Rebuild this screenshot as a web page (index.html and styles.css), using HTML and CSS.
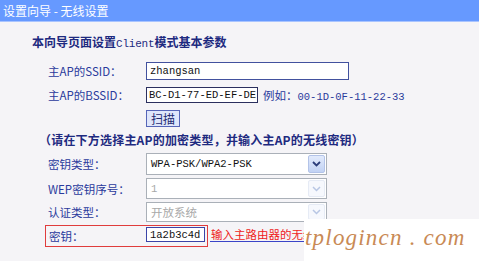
FILE: index.html
```html
<!DOCTYPE html>
<html>
<head>
<meta charset="utf-8">
<link rel="stylesheet" href="styles.css">
</head>
<body>
<div class="header">设置向导 - 无线设置</div>
<div class="content">
  <div class="title">本向导页面设置<span class="mono">Client</span>模式基本参数</div>
  <div class="row r-ssid">
    <span class="label">主AP的SSID：</span>
    <span class="input ssid">zhangsan</span>
  </div>
  <div class="row r-bssid">
    <span class="label">主AP的BSSID：</span>
    <span class="input bssid">BC-D1-77-ED-EF-DE</span>
    <span class="hint">例如：<span class="mono">00-1D-0F-11-22-33</span></span>
  </div>
  <div class="row r-scan">
    <span class="label"></span>
    <span class="btn">扫描</span>
  </div>
  <div class="note">（请在下方选择主AP的加密类型，并输入主AP的无线密钥）</div>
  <div class="row r-sel1">
    <span class="label">密钥类型：</span>
    <span class="select s1"><span class="val mono">WPA-PSK/WPA2-PSK</span><span class="arrow"><svg width="9" height="6" viewBox="0 0 9 6"><path d="M1 1 L4.5 4.5 L8 1" fill="none" stroke="#2c3d7a" stroke-width="1.8"/></svg></span></span>
  </div>
  <div class="row r-sel2">
    <span class="label">WEP密钥序号：</span>
    <span class="select s2 dis"><span class="val mono">1</span><span class="arrow"><svg width="9" height="6" viewBox="0 0 9 6"><path d="M1 1 L4.5 4.5 L8 1" fill="none" stroke="#b8c6e4" stroke-width="1.5"/></svg></span></span>
  </div>
  <div class="row r-sel3">
    <span class="label">认证类型：</span>
    <span class="select s3 dis"><span class="val">开放系统</span><span class="arrow"><svg width="9" height="6" viewBox="0 0 9 6"><path d="M1 1 L4.5 4.5 L8 1" fill="none" stroke="#b8c6e4" stroke-width="1.5"/></svg></span></span>
  </div>
  <div class="row r-key">
    <div class="keybox">
      <span class="klabel">密钥：</span>
      <span class="input key mono">1a2b3c4d</span>
    </div>
    <span class="keynote">输入主路由器的无线密钥</span>
  </div>
</div>
<div class="watermark">tplogincn . com</div>
</body>
</html>
```
FILE: styles.css
```css
html, body {
  margin: 0;
  padding: 0;
}
body {
  width: 479px;
  height: 261px;
  overflow: hidden;
  background: #f5f4f7;
  font-family: "Noto Sans CJK SC", "DejaVu Sans", sans-serif;
  font-size: 12px;
  position: relative;
}
.mono {
  font-family: "Liberation Mono", "Noto Sans CJK SC", monospace;
  font-size: 10.5px;
}
.header {
  height: 21px;
  line-height: 21px;
  background: #6699ff;
  color: #fff;
  padding-left: 3px;
  font-size: 12px;
  border-bottom: 1px solid #a9c4ff;
}
.content {
  display: flex;
  flex-direction: column;
}
.title {
  margin-top: 13px;
  height: 14px;
  line-height: 14px;
  padding-left: 32px;
  color: #1e2a80;
  font-weight: bold;
  font-size: 12px;
}
.title .mono {
  font-size: 11px;
  font-weight: normal;
  letter-spacing: -0.2px;
}
.row {
  display: flex;
  align-items: center;
}
.label {
  box-sizing: content-box;
  width: 98px;
  padding-left: 48px;
  color: #2a3a9c;
  font-size: 11.5px;
  flex: none;
  white-space: nowrap;
}
.input {
  box-sizing: border-box;
  background: #fff;
  border: 1px solid #42519e;
  color: #111;
  font-family: "Liberation Mono", monospace;
  font-size: 10.5px;
  padding-left: 3px;
  display: flex;
  align-items: center;
  flex: none;
}
.r-ssid { margin-top: 13px; height: 18px; }
.ssid { width: 203px; height: 18px; }
.r-bssid { margin-top: 7px; height: 16px; }
.bssid { width: 112px; height: 16px; border-color: #2b2f5e; padding-left: 2px; }
.hint {
  margin-left: 5px;
  color: #2a3a9c;
  font-size: 11.5px;
  white-space: nowrap;
}
.hint .mono { font-size: 10.5px; }
.r-scan { margin-top: 7px; height: 17px; }
.btn {
  width: 34px;
  height: 17px;
  box-sizing: border-box;
  background: #dfe6fb;
  border: 1px solid #5665b8;
  color: #1e2a70;
  font-size: 12px;
  display: flex;
  align-items: center;
  justify-content: center;
}
.note {
  margin-top: 6px;
  height: 14px;
  line-height: 14px;
  padding-left: 39px;
  color: #1e2a80;
  font-weight: bold;
  font-size: 12px;
  letter-spacing: 0.2px;
}
.select {
  width: 181px;
  box-sizing: border-box;
  background: #fff;
  border: 1px solid #aab0b8;
  display: flex;
  align-items: center;
  justify-content: space-between;
  padding: 1px;
  flex: none;
}
.select .val {
  padding-left: 3px;
  color: #111;
}
.select.dis .val { color: #a8a8a8; }
.s3 .val { font-size: 11.5px; }
.arrow {
  width: 17px;
  align-self: stretch;
  box-sizing: border-box;
  background: linear-gradient(#e2eafc, #c2d2f4);
  border: 1px solid #b3c3e8;
  border-radius: 2px;
  display: flex;
  align-items: center;
  justify-content: center;
}
.dis .arrow {
  background: #f6f8fd;
  border-color: #e6ebf5;
}
.r-sel1 { margin-top: 6px; height: 22px; }
.r-sel1 .select { height: 22px; }
.r-sel2 { margin-top: 3px; height: 21px; }
.r-sel2 .select { height: 21px; }
.r-sel3 { margin-top: 3px; height: 20px; }
.r-sel3 .select { height: 20px; }
.r-key { margin-top: 3px; height: 22px; align-items: flex-start; }
.keybox {
  margin-left: 45px;
  width: 163px;
  height: 22px;
  box-sizing: border-box;
  border: 1px solid #e03c3c;
  display: flex;
  align-items: flex-start;
  flex: none;
}
.klabel {
  box-sizing: content-box;
  width: 97px;
  padding-left: 3px;
  margin-top: 3px;
  line-height: 14px;
  color: #2a3a9c;
  font-size: 11.5px;
  flex: none;
}
.key {
  width: 59px;
  height: 15px;
  margin-top: 1px;
  border-color: #3b44a8;
  font-size: 10.5px;
}
.keynote {
  margin-top: 3px;
  margin-left: 2px;
  width: 93px;
  overflow: hidden;
  height: 13px;
  line-height: 13px;
  padding-left: 1px;
  color: #ee1c1c;
  font-size: 11.5px;
  white-space: nowrap;
  border-bottom: 1px solid #3b44c8;
}
.watermark {
  position: absolute;
  left: 304px;
  top: 219px;
  width: 175px;
  height: 42px;
  background: #fff;
  color: #c98a55;
  font-family: "Liberation Serif", serif;
  font-style: italic;
  font-size: 23px;
  line-height: 38px;
  padding-left: 1px;
  letter-spacing: 1.2px;
  box-sizing: border-box;
  white-space: nowrap;
}
```
